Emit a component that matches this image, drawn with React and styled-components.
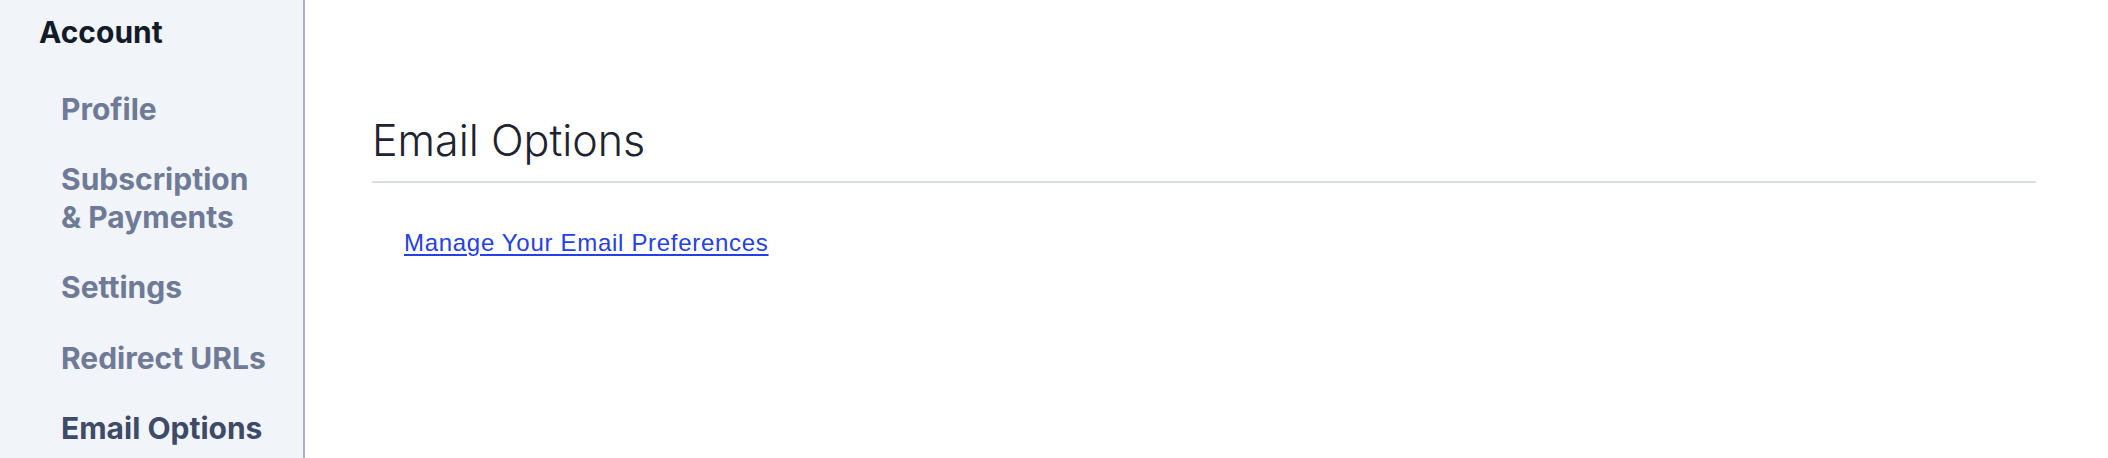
import React from 'react';
import styled, { createGlobalStyle } from 'styled-components';

const GlobalStyle = createGlobalStyle`
  html, body {
    margin: 0;
    padding: 0;
    background: #ffffff;
  }
  body {
    font-family: Inter, "Noto Sans", sans-serif;
  }
`;

const Layout = styled.div`
  display: flex;
  width: 100%;
  height: 100vh;
  overflow: hidden;
`;

const Sidebar = styled.nav`
  flex: 0 0 305px;
  box-sizing: border-box;
  background: #f1f4f9;
  border-right: 2px solid #a9b1c8;
  padding: 14px 0 0 39px;
`;

const SectionTitle = styled.div`
  font-family: Inter, sans-serif;
  font-weight: 700;
  font-size: 30px;
  line-height: 37.5px;
  color: #131a28;
  margin-bottom: 39px;
`;

const NavList = styled.ul`
  list-style: none;
  margin: 0;
  padding: 0 0 0 22px;
  display: flex;
  flex-direction: column;
  gap: 33px;
`;

const NavItem = styled.li`
  font-family: Inter, sans-serif;
  font-weight: 700;
  font-size: 30px;
  line-height: 37.5px;
  color: ${(p) => (p.$active ? '#3e4a68' : '#6e7a96')};
  cursor: pointer;
`;

const Main = styled.main`
  flex: 1;
  padding: 114px 72px 0 67px;
`;

const Heading = styled.h2`
  margin: 0;
  font-family: Inter, sans-serif;
  font-weight: 300;
  font-size: 43px;
  line-height: 53px;
  color: #1d2330;
  padding-bottom: 14px;
  border-bottom: 2px solid #d9dde3;
`;

const Body = styled.div`
  padding: 46px 0 0 32px;
  line-height: 28px;
`;

const Link = styled.a`
  font-family: "Liberation Sans", Arial, sans-serif;
  font-size: 24px;
  letter-spacing: 0.7px;
  color: #2440e8;
  text-decoration: underline;
  text-underline-offset: 3px;
`;

const items = [
  { label: 'Profile' },
  { label: 'Subscription\n& Payments' },
  { label: 'Settings' },
  { label: 'Redirect URLs' },
  { label: 'Email Options', active: true },
];

export default function App() {
  return (
    <>
      <GlobalStyle />
      <Layout>
        <Sidebar>
          <SectionTitle>Account</SectionTitle>
          <NavList>
            {items.map((it) => (
              <NavItem key={it.label} $active={it.active}>
                {it.label.split('\n').map((l, i) => (
                  <div key={i}>{l}</div>
                ))}
              </NavItem>
            ))}
          </NavList>
        </Sidebar>
        <Main>
          <Heading>Email Options</Heading>
          <Body>
            <Link href="#">Manage Your Email Preferences</Link>
          </Body>
        </Main>
      </Layout>
    </>
  );
}
